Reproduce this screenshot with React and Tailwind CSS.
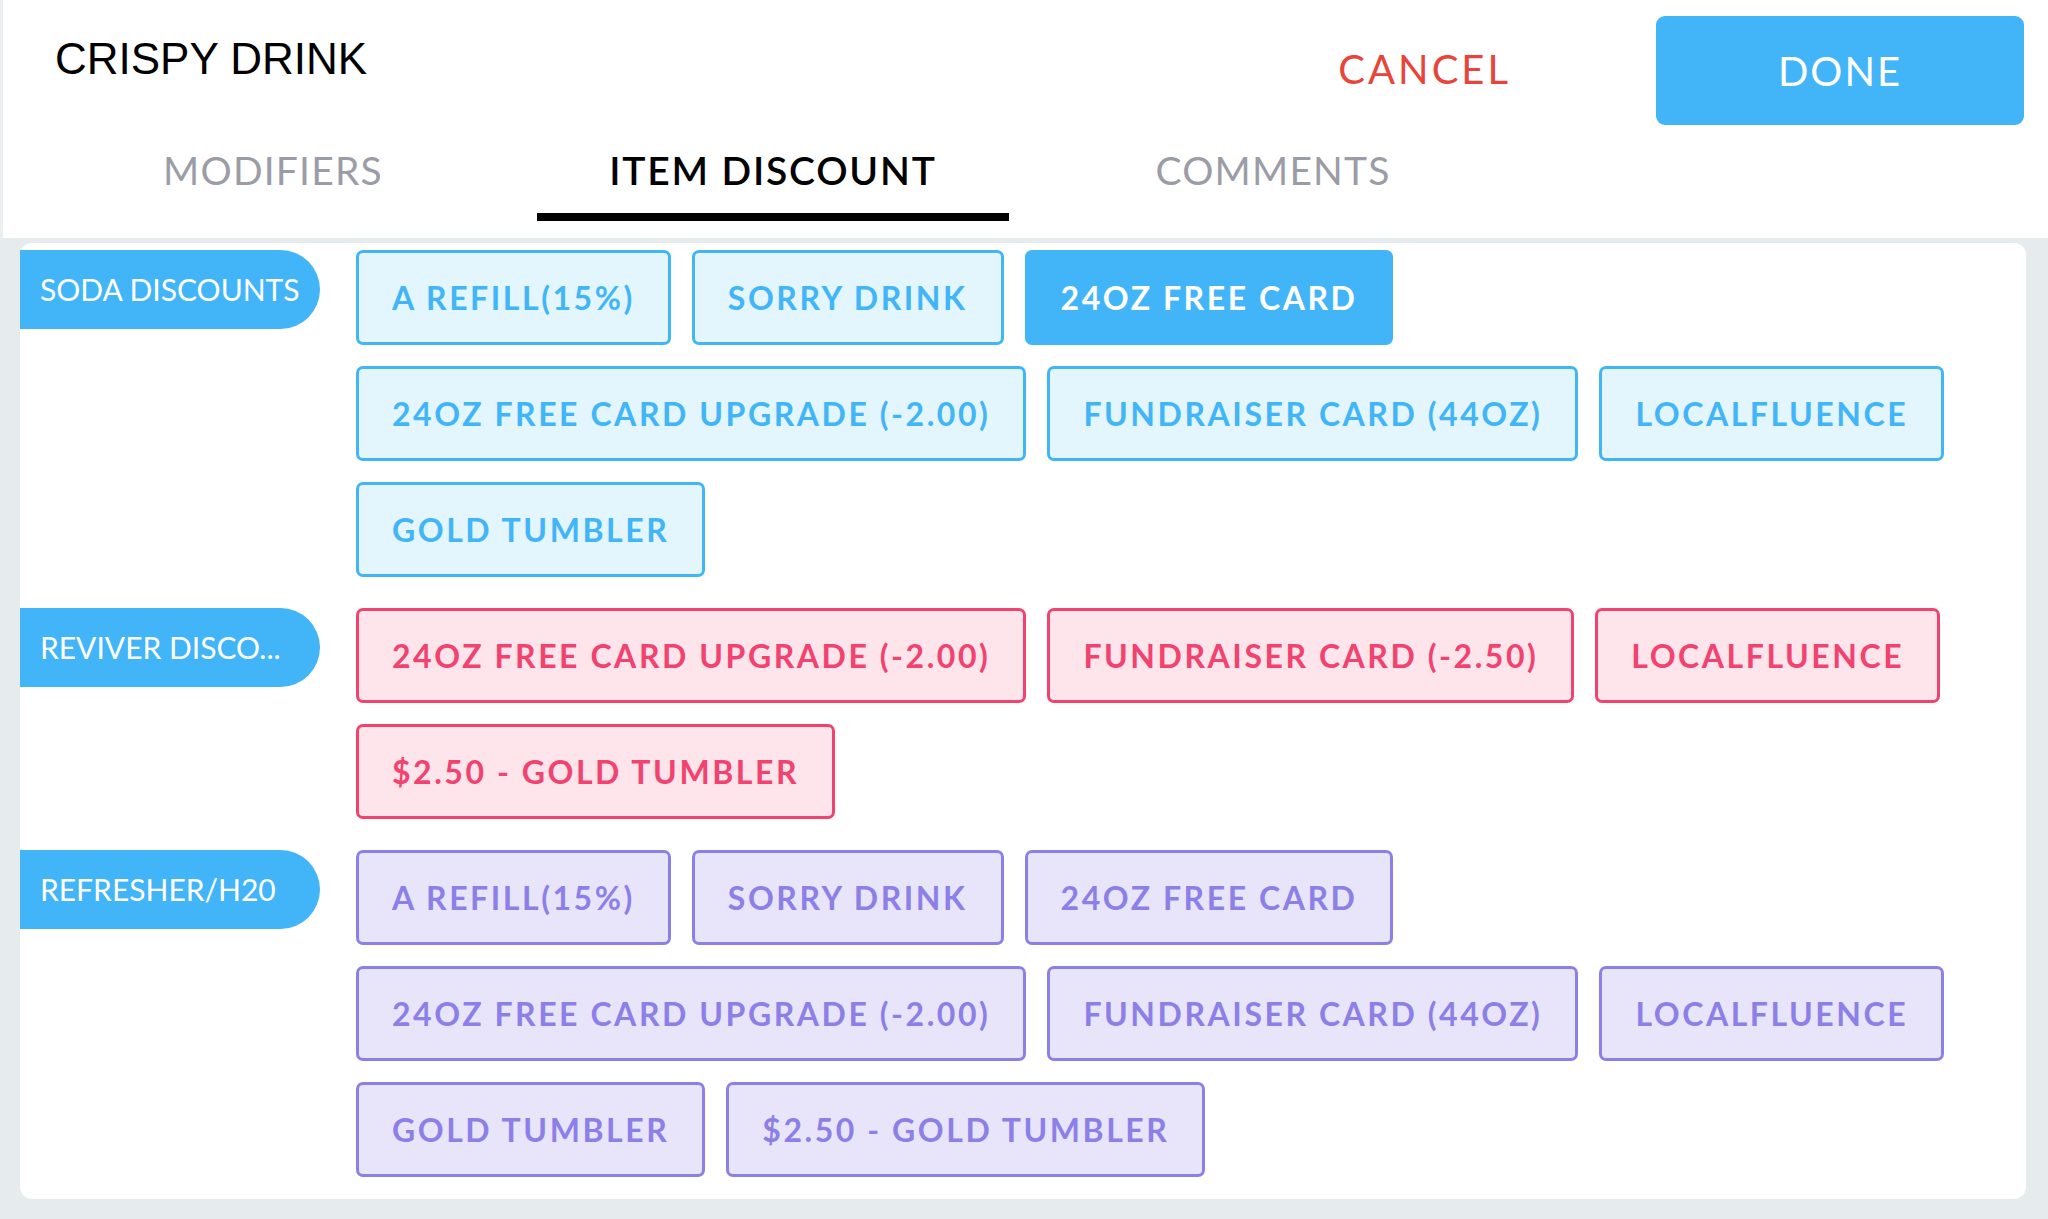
import React from "react";

const sections = [
  {
    label: "SODA DISCOUNTS",
    tone: "blue",
    items: [
      { name: "A REFILL(15%)" },
      { name: "SORRY DRINK" },
      { name: "24OZ FREE CARD", selected: true },
      { name: "24OZ FREE CARD UPGRADE (-2.00)" },
      { name: "FUNDRAISER CARD (44OZ)" },
      { name: "LOCALFLUENCE" },
      { name: "GOLD TUMBLER" },
    ],
  },
  {
    label: "REVIVER DISCO...",
    tone: "pink",
    items: [
      { name: "24OZ FREE CARD UPGRADE (-2.00)" },
      { name: "FUNDRAISER CARD (-2.50)" },
      { name: "LOCALFLUENCE" },
      { name: "$2.50 - GOLD TUMBLER" },
    ],
  },
  {
    label: "REFRESHER/H20",
    tone: "purple",
    items: [
      { name: "A REFILL(15%)" },
      { name: "SORRY DRINK" },
      { name: "24OZ FREE CARD" },
      { name: "24OZ FREE CARD UPGRADE (-2.00)" },
      { name: "FUNDRAISER CARD (44OZ)" },
      { name: "LOCALFLUENCE" },
      { name: "GOLD TUMBLER" },
      { name: "$2.50 - GOLD TUMBLER" },
    ],
  },
];

// full class strings per tone, so tailwind picks them up
const toneClasses = {
  blue: "border-[#42b5f9] bg-[#e3f5fd] text-[#42b5f9]",
  pink: "border-[#f2426f] bg-[#fde5eb] text-[#f2426f]",
  purple: "border-[#8c80e8] bg-[#e8e5fb] text-[#8c80e8]",
};

function DiscountButton({ name, tone, selected }) {
  const colors = selected
    ? "border-[#42b5f9] bg-[#42b5f9] text-white"
    : toneClasses[tone];
  return (
    <button
      className={`h-[95px] px-[33px] border-[3px] rounded-[7px] text-[32px] font-bold tracking-[2.55px] leading-none whitespace-nowrap ${colors}`}
    >
      {name}
    </button>
  );
}

function Section({ label, tone, items }) {
  return (
    <div className="flex items-start">
      <div className="w-[300px] h-[79px] shrink-0 bg-[#42b5f9] rounded-r-[40px] flex items-center pl-[20px] text-white text-[30px] whitespace-nowrap">
        {label}
      </div>
      <div className="ml-[36px] flex flex-wrap gap-x-[21px] gap-y-[21px] w-[1660px]">
        {items.map((it, i) => (
          <DiscountButton key={i} name={it.name} tone={tone} selected={it.selected} />
        ))}
      </div>
    </div>
  );
}

export default function App() {
  const tabs = ["MODIFIERS", "ITEM DISCOUNT", "COMMENTS"];
  const active = 1;

  return (
    <div className="w-[2048px] h-[1219px] bg-[#e6ebee] flex flex-col overflow-hidden" style={{ fontFamily: "Lato, 'Open Sans', sans-serif" }}>
      {/* header */}
      <div className="bg-white h-[238px] shrink-0 border-l-[3px] border-[#eceff1]">
        <div className="flex items-start justify-between">
          <div className="pl-[52px] pt-[37px] text-[44px] text-black leading-none" style={{ fontFamily: "'Liberation Sans', Arial, sans-serif" }}>
            CRISPY DRINK
          </div>
          <div className="flex items-start pt-[16px] pr-[24px]">
            <button className="mt-[33px] mr-[145px] text-[40px] text-[#e8443a] tracking-[3px] leading-none">CANCEL</button>
            <button className="w-[368px] h-[109px] rounded-[9px] bg-[#42b5f9] text-white text-[40px] tracking-[2px] leading-none">DONE</button>
          </div>
        </div>
        <div className="flex pl-[20px] mt-[13px]">
          {tabs.map((t, i) => (
            <div key={t} className="w-[500px] flex flex-col items-center">
              <div className={`text-[39px] leading-none pt-[13px] h-[75px] ${i === active ? "text-black font-semibold tracking-[1.8px]" : "text-[#9c9ca6] tracking-[1.2px]"}`}>
                {t}
              </div>
              <div className={`h-[8px] w-[472px] ${i === active ? "bg-black" : "bg-transparent"}`} />
            </div>
          ))}
        </div>
      </div>

      {/* discount card */}
      <div className="ml-[20px] mr-[22px] mt-[5px] bg-white rounded-[12px] pt-[7px] pb-[22px] flex flex-col gap-[31px]">
        {sections.map((s) => (
          <Section key={s.label} {...s} />
        ))}
      </div>
    </div>
  );
}
